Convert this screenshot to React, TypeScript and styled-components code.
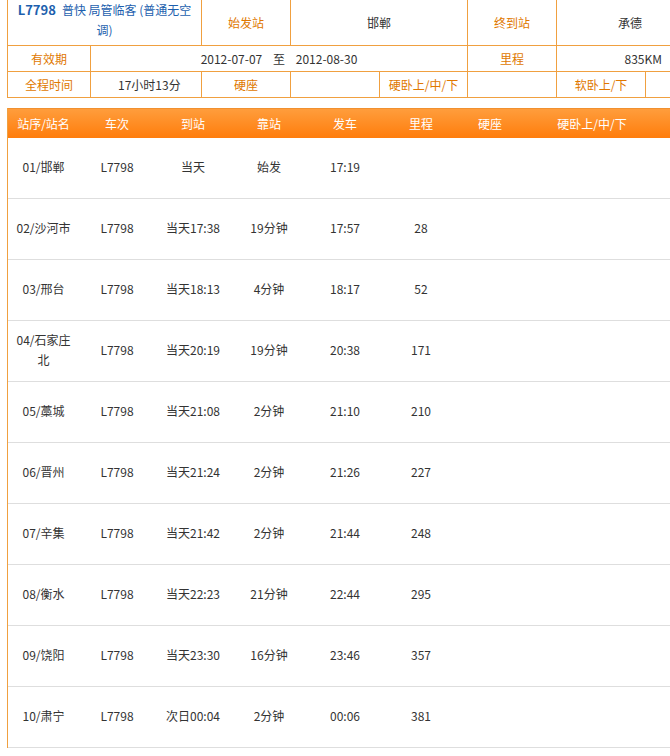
import styled, { createGlobalStyle } from 'styled-components';

const Global = createGlobalStyle`
  body {
    margin: 0;
    overflow: hidden;
    background: #fff;
    font-family: "Noto Sans CJK SC", "Noto Sans", sans-serif;
    font-size: 12px;
    color: #333;
  }
`;

const Page = styled.div`
  width: 800px;
  padding: 0 0 0 7px;
`;

const InfoTable = styled.div`
  display: grid;
  grid-template-columns: 83px 111px 89px 89px 88px 89px 89px 89px;
  grid-template-rows: 46px 26px 26px;
  border-left: 1px solid #f0a040;
  border-bottom: 1px solid #f0a040;
  margin-top: -1px;
  width: 728px;
`;

const Cell = styled.div<{ $span?: number; $label?: boolean; $align?: string }>`
  grid-column: span ${(p) => p.$span ?? 1};
  border-top: 1px solid #f0a040;
  border-right: 1px solid #f0a040;
  display: flex;
  align-items: center;
  justify-content: ${(p) => p.$align ?? 'center'};
  color: ${(p) => (p.$label ? '#e07800' : '#333')};
  white-space: nowrap;
`;

const Title = styled.div`
  grid-column: span 2;
  border-top: 1px solid #f0a040;
  border-right: 1px solid #f0a040;
  color: #1d5fae;
  font-size: 12px;
  line-height: 20px;
  text-align: center;
  padding: 0 4px;
  b {
    font-size: 13px;
    margin-right: 6px;
  }
`;

const Schedule = styled.div`
  margin-top: 10px;
  border-left: 1px solid #f0a040;
  width: 720px;
`;

const cols = '71px 76px 76px 76px 76px 76px 62px 142px 60px';

const Head = styled.div`
  display: grid;
  grid-template-columns: ${cols};
  height: 29px;
  align-items: center;
  background: linear-gradient(#ff9d3c, #ff7d0c);
  border-top: 1px solid #f09030;
  color: #fff;
  & > span { text-align: center; }
`;

const Row = styled.div`
  display: grid;
  grid-template-columns: ${cols};
  height: 60px;
  padding-bottom: 0;
  align-items: center;
  border-bottom: 1px solid #dedede;
  & > span { text-align: center; margin-top: -3px; }
`;

const rows = [
  ['01/邯郸', '当天', '始发', '17:19', ''],
  ['02/沙河市', '当天17:38', '19分钟', '17:57', '28'],
  ['03/邢台', '当天18:13', '4分钟', '18:17', '52'],
  ['04/石家庄北', '当天20:19', '19分钟', '20:38', '171'],
  ['05/藁城', '当天21:08', '2分钟', '21:10', '210'],
  ['06/晋州', '当天21:24', '2分钟', '21:26', '227'],
  ['07/辛集', '当天21:42', '2分钟', '21:44', '248'],
  ['08/衡水', '当天22:23', '21分钟', '22:44', '295'],
  ['09/饶阳', '当天23:30', '16分钟', '23:46', '357'],
  ['10/肃宁', '次日00:04', '2分钟', '00:06', '381'],
];

const Station = styled.span`
  line-height: 20px;
  max-width: 64px;
  justify-self: center;
`;

export default function App() {
  return (
    <Page>
      <Global />
      <InfoTable>
        <Title>
          <b>L7798</b>普快 局管临客 (普通无空调)
        </Title>
        <Cell $label>始发站</Cell>
        <Cell $span={2}>邯郸</Cell>
        <Cell $label>终到站</Cell>
        <Cell $span={2} $align="flex-end" style={{ paddingRight: 92 }}>承德</Cell>

        <Cell $label>有效期</Cell>
        <Cell $span={4}>2012-07-07&nbsp;&nbsp;&nbsp;&nbsp;至&nbsp;&nbsp;&nbsp;&nbsp;2012-08-30</Cell>
        <Cell $label>里程</Cell>
        <Cell $span={2} $align="flex-end" style={{ paddingRight: 72 }}>835KM</Cell>

        <Cell $label>全程时间</Cell>
        <Cell style={{ justifyContent: 'flex-start', paddingLeft: 27 }}>17小时13分</Cell>
        <Cell $label>硬座</Cell>
        <Cell />
        <Cell $label>硬卧上/中/下</Cell>
        <Cell />
        <Cell $label>软卧上/下</Cell>
        <Cell />
      </InfoTable>

      <Schedule>
        <Head>
          <span>站序/站名</span>
          <span>车次</span>
          <span>到站</span>
          <span>靠站</span>
          <span>发车</span>
          <span>里程</span>
          <span>硬座</span>
          <span>硬卧上/中/下</span>
          <span />
        </Head>
        {rows.map((r) => (
          <Row key={r[0]}>
            {r[0].length > 6 ? <Station>{r[0]}</Station> : <span>{r[0]}</span>}
            <span>L7798</span>
            <span>{r[1]}</span>
            <span>{r[2]}</span>
            <span>{r[3]}</span>
            <span>{r[4]}</span>
            <span />
            <span />
            <span />
          </Row>
        ))}
      </Schedule>
    </Page>
  );
}
